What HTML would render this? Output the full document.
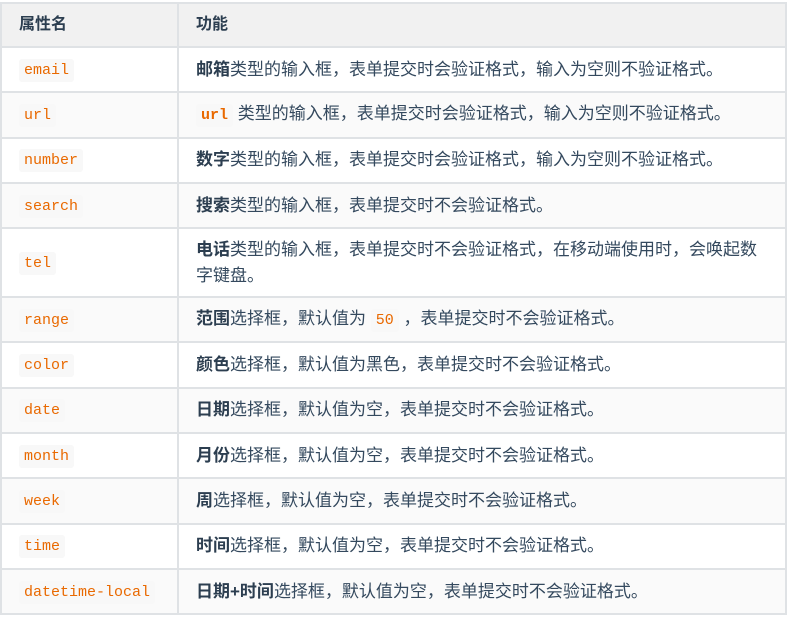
<!DOCTYPE html>
<html><head><meta charset="utf-8"><style>
html,body{margin:0;padding:0;background:#fff;width:788px;height:618px;overflow:hidden}
table{position:absolute;left:0;top:2px;border-collapse:collapse;table-layout:fixed;width:787px;font-family:"Liberation Sans","Noto Sans CJK SC",sans-serif;font-size:17px;color:#34495e}
td,th{border:2px solid #dfe2e5;padding:0 17px;text-align:left;vertical-align:middle;line-height:26px}
th{background:#f1f1f1;font-weight:bold;height:42px;color:#2c3e50;font-size:16px}
td{height:43.3px}
tr:nth-child(odd) td{background:#fafafa}
tr.tall td{height:67px}
code{font-family:"Liberation Mono",monospace;font-size:15px;color:#e96900;background:#f8f8f8;padding:3px 5px;border-radius:3px}
b{color:#2c3e50}
</style></head><body>
<table>
<colgroup><col style="width:177px"><col></colgroup>
<tr><th>属性名</th><th>功能</th></tr>
<tr><td><code>email</code></td><td><b>邮箱</b>类型的输入框，表单提交时会验证格式，输入为空则不验证格式。</td></tr>
<tr><td><code>url</code></td><td><code style="font-weight:bold">url</code> 类型的输入框，表单提交时会验证格式，输入为空则不验证格式。</td></tr>
<tr><td><code>number</code></td><td><b>数字</b>类型的输入框，表单提交时会验证格式，输入为空则不验证格式。</td></tr>
<tr><td><code>search</code></td><td><b>搜索</b>类型的输入框，表单提交时不会验证格式。</td></tr>
<tr class="tall"><td><code>tel</code></td><td><b>电话</b>类型的输入框，表单提交时不会验证格式，在移动端使用时，会唤起数字键盘。</td></tr>
<tr><td><code>range</code></td><td><b>范围</b>选择框，默认值为 <code>50</code> ，表单提交时不会验证格式。</td></tr>
<tr><td><code>color</code></td><td><b>颜色</b>选择框，默认值为黑色，表单提交时不会验证格式。</td></tr>
<tr><td><code>date</code></td><td><b>日期</b>选择框，默认值为空，表单提交时不会验证格式。</td></tr>
<tr><td><code>month</code></td><td><b>月份</b>选择框，默认值为空，表单提交时不会验证格式。</td></tr>
<tr><td><code>week</code></td><td><b>周</b>选择框，默认值为空，表单提交时不会验证格式。</td></tr>
<tr><td><code>time</code></td><td><b>时间</b>选择框，默认值为空，表单提交时不会验证格式。</td></tr>
<tr><td><code>datetime-local</code></td><td><b>日期+时间</b>选择框，默认值为空，表单提交时不会验证格式。</td></tr>
</table>
</body></html>
